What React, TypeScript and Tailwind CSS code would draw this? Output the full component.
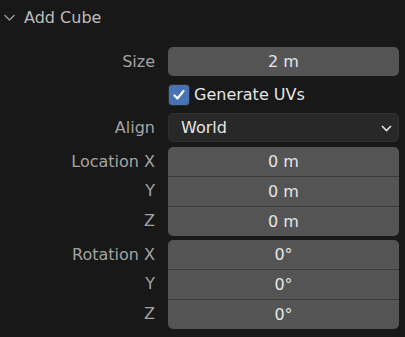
const font = { fontFamily: "'DejaVu Sans', sans-serif" };

function Label({ children }: { children?: string }) {
  return (
    <div className="flex items-center justify-end text-[16px] text-[#a3a3a3]">
      {children}
    </div>
  );
}

function Group({ label, values }: { label: string; values: string[] }) {
  const axes = ["X", "Y", "Z"];
  return (
    <div className="grid grid-cols-[155px_1fr] gap-x-[13px]">
      <div className="flex flex-col">
        {axes.map((a, i) => (
          <div
            key={a}
            className={
              "flex items-center justify-end text-[16px] text-[#a3a3a3] " +
              (i === 0 ? "h-[29px]" : "h-[30px]")
            }
          >
            {i === 0 ? `${label} ${a}` : a}
          </div>
        ))}
      </div>
      <div className="flex flex-col overflow-hidden rounded-[5px] bg-[#545454]">
        {values.map((v, i) => (
          <div
            key={i}
            className={
              "flex items-center justify-center text-[16px] text-[#e5e5e5] " +
              (i > 0 ? "h-[30px] border-t border-[#3a3a3a]" : "h-[29px]")
            }
          >
            {v}
          </div>
        ))}
      </div>
    </div>
  );
}

export default function App() {
  return (
    <div
      className="h-[337px] w-[405px] overflow-hidden bg-[#181818] pr-[6px]"
      style={font}
    >
      <div className="flex h-[35px] items-center gap-[8px] pl-[3px] text-[16px] text-[#bdbdbd]">
        <svg width="13" height="13" viewBox="0 0 13 13" fill="none">
          <path d="M1.5 4 L6.5 9 L11.5 4" stroke="#9a9a9a" strokeWidth="1.4" />
        </svg>
        <span>Add Cube</span>
      </div>

      <div className="mt-[12px] grid grid-cols-[155px_1fr] gap-x-[13px]">
        <Label>Size</Label>
        <div className="flex h-[29px] items-center justify-center rounded-[5px] bg-[#545454] text-[16px] text-[#e5e5e5]">
          2 m
        </div>
      </div>

      <div className="mt-[8px] grid grid-cols-[155px_1fr] gap-x-[13px]">
        <Label />
        <div className="flex h-[22px] items-center gap-[4px] text-[16px] text-[#e5e5e5]">
          <div className="flex h-[22px] w-[22px] items-center justify-center rounded-[4px] border border-[#2a2a2a] bg-[#4772b3]">
            <svg width="14" height="14" viewBox="0 0 14 14" fill="none">
              <path
                d="M2.5 7.5 L5.5 10.5 L11.5 3"
                stroke="#ffffff"
                strokeWidth="2.2"
                strokeLinecap="round"
                strokeLinejoin="round"
              />
            </svg>
          </div>
          <span>Generate UVs</span>
        </div>
      </div>

      <div className="mt-[7px] grid grid-cols-[155px_1fr] gap-x-[13px]">
        <Label>Align</Label>
        <div className="flex h-[29px] items-center justify-between rounded-[5px] border border-[#303030] bg-[#282828] pl-[12px] pr-[6px] text-[16px] text-[#e5e5e5]">
          <span>World</span>
          <svg width="11" height="8" viewBox="0 0 11 8" fill="none">
            <path d="M1 2 L5.5 6.5 L10 2" stroke="#e0e0e0" strokeWidth="1.6" />
          </svg>
        </div>
      </div>

      <div className="mt-[5px]">
        <Group label="Location" values={["0 m", "0 m", "0 m"]} />
      </div>
      <div className="mt-[4px]">
        <Group label="Rotation" values={["0°", "0°", "0°"]} />
      </div>
    </div>
  );
}
